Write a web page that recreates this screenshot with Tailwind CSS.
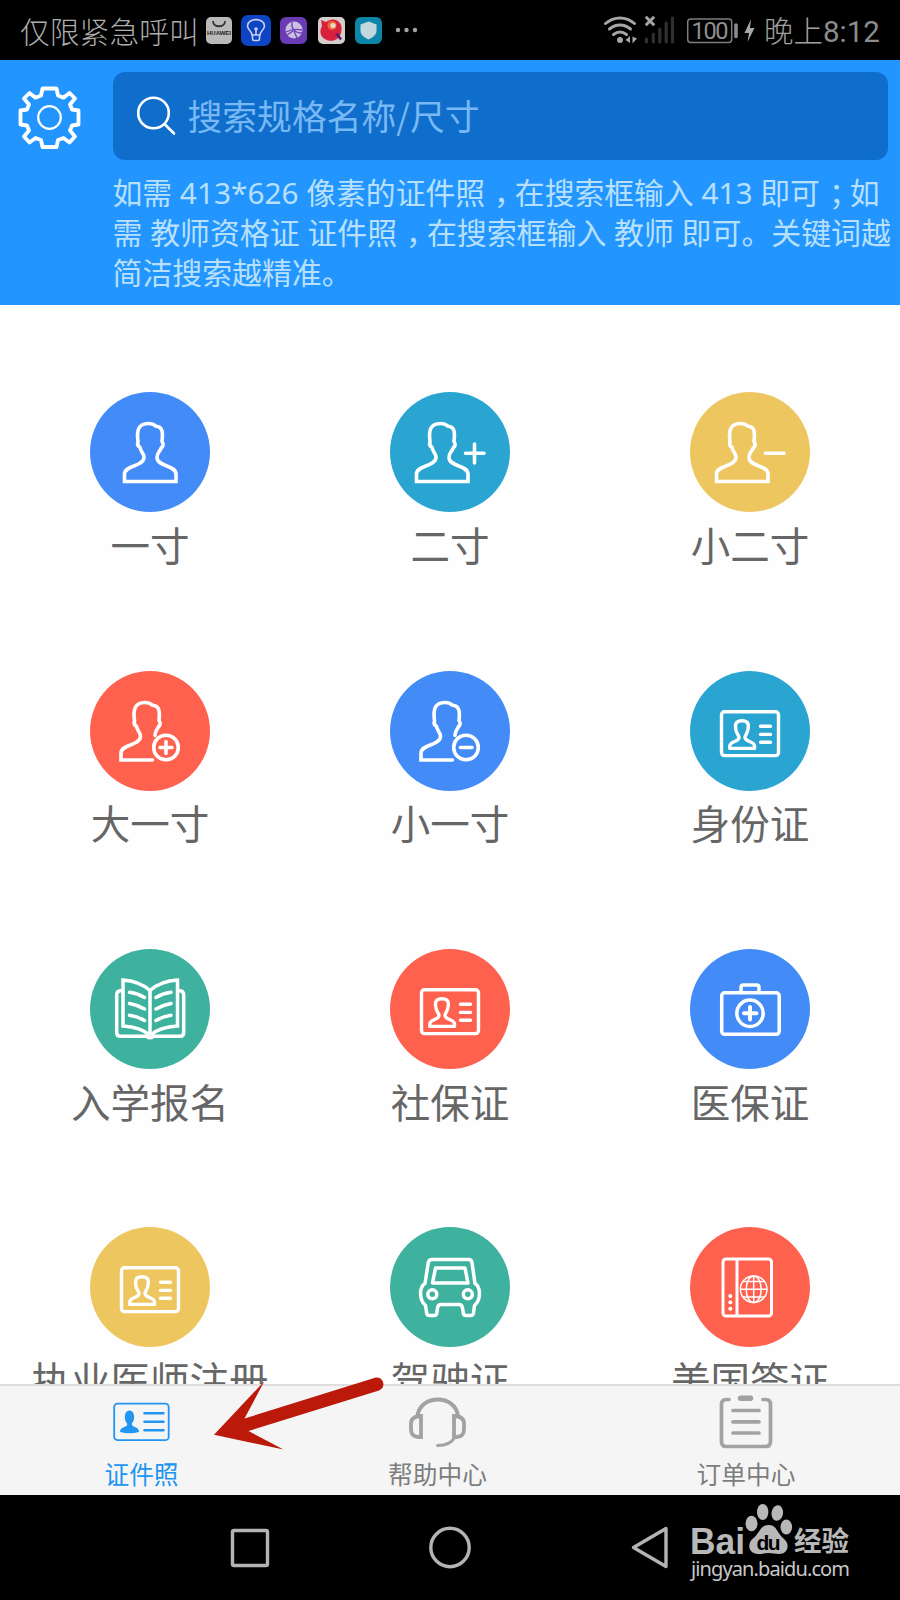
<!DOCTYPE html>
<html lang="zh-CN">
<head>
    <meta charset="UTF-8">
    <meta name="viewport" content="width=device-width, initial-scale=1.0">
    <title>证件照</title>
    <script src="https://cdn.jsdelivr.net/npm/@tailwindcss/browser@4"></script>
</head>
<body class="bg-black">
    <!-- Shared icon shapes -->
    <svg class="hidden">
        <symbol id="person" viewBox="0 0 120 120" overflow="visible">
            <path d="M34.5 89.5V82C34.5 73 53.5 75 54 65.5C54 61 51 60.5 50 55.5C47.5 54 47.2 52 48 49.5C46.5 39 48 31.5 58.5 31.5C62 31.5 64 32.500 66 34.200C73 34.500 73 41 72 49.5C74 52 73 54.5 71.5 55.5C69.5 60.5 66.5 61 67 66C68 75 86 73 86 82V89.5Z"/>
        </symbol>
        <symbol id="person-open" viewBox="0 0 120 120">
            <path d="M62.5 89H31V82C31 73 50 75 50.5 65.5C50.5 61 47.5 60.5 46.5 55.5C44 54 43.7 52 44.5 49.5C43 39 44.5 31.5 55 31.5C58.5 31.5 60.5 32.5 62.5 34.2C69.5 34.5 70 41 69 49.5C71 52 70 54.5 68.5 55.5C67 59 65 60 65 64.5"/>
            <circle cx="76" cy="76.5" r="12.3"/>
        </symbol>
        <symbol id="card" viewBox="0 0 120 120">
            <rect x="31.5" y="40.8" width="57" height="43.8" rx="3"/>
            <path d="M39.800 77.400V75C39.800 70 49 71 49 66.500C49 64 46 62.500 45.800 58C44.500 52 47 49.700 52 49.700C57 49.700 59.300 52 58 58C57.800 62.500 55 64 55 66.500C55 71 64.500 70 64.500 75V77.400Z"/>
            <path d="M70.5 55.2H80.5M70.5 63.4H80.5M70.5 71.3H80.5"/>
        </symbol>
    </svg>

    <div class="flex flex-col w-[900px] h-[1600px] overflow-hidden relative font-['Noto_Sans','Noto_Sans_CJK_SC',sans-serif]">
        <!-- Status bar -->
        <div class="h-[60px] shrink-0 flex items-center pl-5 pr-5 text-[#8c8c8c] text-[30px] leading-none">
            <span class="w-[186px] pt-[1px] font-['Noto_Sans_CJK_SC',sans-serif] font-light text-[29.8px] text-[#acacac] whitespace-nowrap">仅限紧急呼叫</span>
            <svg class="w-[216px] h-[60px]" viewBox="206 0 216 60" fill="none">
                <rect x="206" y="17" width="26" height="27" rx="5" fill="#b9b9b9"/>
                <path d="M213 21C213 28 225 28 225 21" stroke="#333" stroke-width="1.8"/>
                <text x="219" y="34.5" font-size="6" font-weight="700" fill="#222" text-anchor="middle" textLength="24" font-family="Liberation Sans, sans-serif">HUAWEI</text>
                <rect x="241" y="15" width="30" height="31" rx="7" fill="#0d44c4"/>
                <path d="M252 35C252 31 247.500 30 247.500 26C247.500 17.500 264.500 17.500 264.500 26C264.500 30 260 31 260 35ZM252.500 36V39Q252.500 40.500 254 40.500H258Q259.500 40.500 259.500 39V36M256 35V29" stroke="#c9d2ea" stroke-width="1.600" stroke-linecap="round"/>
                <circle cx="256" cy="29" r="1.800" fill="#c9d2ea"/>
                <rect x="280" y="17" width="27" height="27" rx="6" fill="#6a3bb4"/>
                <circle cx="294" cy="30" r="8.500" fill="#c9bfe0"/>
                <path d="M292 22C291 29 295 33 302 33M286 32C292 29 297 29 302 30M293 31L287 35M294 31L297 38" stroke="#6a3bb4" stroke-width="1.300"/>
                <rect x="318" y="17" width="27" height="27" rx="5" fill="#d4cdcb"/>
                <path d="M321 20L326 22C333 16 343 21 341.500 30C341 38 335 42 328 40.500C320 38 319 31 322 26Z" fill="#d8213f"/>
                <circle cx="332" cy="25.500" r="4.500" fill="#ee6a2d"/>
                <circle cx="333" cy="25.500" r="2.600" fill="#e8d8d4"/>
                <path d="M336.500 33.500L341 39.500" stroke="#5a1b6c" stroke-width="2.600"/>
                <rect x="355" y="17" width="27" height="27" rx="6" fill="#0c86a8"/>
                <path d="M368.500 21.500L376.500 24.500V31C376.500 35 372 38 368.500 39.500C365 38 360.500 35 360.500 31V24.500Z" fill="#c2d8de"/>
                <g fill="#a3a3a3"><circle cx="398" cy="30" r="2.200"/><circle cx="406.500" cy="30" r="2.200"/><circle cx="415" cy="30" r="2.200"/></g>
            </svg>
            <svg class="w-[160px] h-[60px] ml-auto mr-[3px]" viewBox="600 0 160 60" fill="none">
                <g stroke="#a6a6a6" stroke-width="3" stroke-linecap="round">
                    <path d="M605.500 23.500C614 16 626 16 634.500 23.500M609.500 29C616 23.500 624 23.500 630.500 29M613.500 34.500C618 31 622 31 626.500 34.500"/>
                    <path d="M645.800 16.800L654.200 25.200M654.200 16.800L645.800 25.200" stroke-linecap="butt"/>
                </g>
                <circle cx="620" cy="40" r="3" fill="#a6a6a6"/>
                <path d="M630 36V43L625.500 40ZM632.500 36.500V43.500L637 38.500Z" fill="#a6a6a6"/>
                <path d="M646.500 39V42M653.300 34V42M659.800 29V42M666.200 23V42M672.500 18V42" stroke="#2f2f2f" stroke-width="3.200" stroke-linecap="round"/>
                <rect x="687.700" y="19" width="44" height="23.500" rx="3" stroke="#7d7d7d" stroke-width="1.500"/>
                <text x="710" y="39" font-size="23.500" fill="#8f8f8f" text-anchor="middle" textLength="37" font-family="Roboto, sans-serif">100</text>
                <path d="M736 25V36.500" stroke="#8c8c8c" stroke-width="3.600" stroke-linecap="round"/>
                <path d="M751 19L744.500 33H749L747.500 42L754.500 28H750Z" fill="#a6a6a6"/>
            </svg>
            <span class="w-[117px] pt-[5px] pl-[1px] font-[Roboto,'Noto_Sans_CJK_SC',sans-serif] text-[29.5px] whitespace-nowrap"><span class="font-light text-[#a0a0a0]">晚上</span>8:12</span>
        </div>

        <!-- Header -->
        <div class="h-[245px] shrink-0 bg-[#2295ff] flex pt-3">
            <div class="w-[112.5px] shrink-0 pl-[18px] pt-[13.5px]">
                <svg class="w-[63px] h-[63px]" viewBox="-31.500 -31.500 63 63" fill="none" stroke="#fff" stroke-linejoin="round">
                    <path stroke-width="3.800" d="M-7 -29H7L8.500 -22L14 -19.800L20 -24.500L25.500 -19L20.500 -13L22.500 -8L29 -7V7L22.500 8L20.500 13L25.500 19L20 25L14 20.500L8.500 22.500L7 29.500H-7L-8.500 22.500L-14 20.500L-20 25L-25.500 19L-20.500 13L-22.500 8L-29 7V-7L-22.500 -8L-20.500 -13L-25.500 -19L-20 -24.500L-14 -19.800L-8.500 -22Z"/>
                    <circle r="11.300" stroke-width="2.200"/>
                </svg>
            </div>
            <div>
                <div class="w-[775px] h-[88px] rounded-xl bg-[#0f6ecb] flex items-center pl-6">
                    <svg class="w-10 h-10" viewBox="0 0 40 40" fill="none" stroke="#fff" stroke-width="2.600" stroke-linecap="round">
                        <circle cx="16.500" cy="17" r="15.300"/>
                        <path d="M27.500 28L37 37.500"/>
                    </svg>
                    <span class="ml-[11px] -mt-0.5 text-[34.8px] leading-none text-[#78b8f4] font-['Noto_Sans_CJK_SC',sans-serif]">搜索规格名称/尺寸</span>
                </div>
                <div class="mt-[13px] text-[29.9px] leading-[40px] text-[#b8e0fc] whitespace-nowrap">
                    <p class="h-[40px] text-[29.8px]">如需 413*626 像素的证件照<span class="pl-[9px] -mr-[9px]">，</span>在搜索框输入 413 即可<span class="pl-[9px] -mr-[9px]">；</span>如</p>
                    <p class="h-[40px]">需 教师资格证 证件照<span class="pl-[9px] -mr-[9px]">，</span>在搜索框输入 教师 即可。关键词越</p>
                    <p class="h-[40px]">简洁搜索越精准。</p>
                </div>
            </div>
        </div>

        <!-- Photo sizes -->
        <div class="h-[1079px] shrink-0 overflow-hidden bg-[#fefefe] pt-[87.4px]">
            <div class="grid grid-cols-3 auto-rows-[278.3px] text-[39.5px] leading-[56px] text-[#666] whitespace-nowrap">
                <div class="flex flex-col items-center">
                    <div class="size-[120px] rounded-full bg-[#438bf7]">
                        <svg viewBox="0 0 120 120" fill="none" stroke="#fff" stroke-width="3.600"><use href="#person" width="120" height="120"/></svg>
                    </div>
                    <span class="mt-[5.6px]">一寸</span>
                </div>
                <div class="flex flex-col items-center">
                    <div class="size-[120px] rounded-full bg-[#2aa5d2]">
                        <svg viewBox="0 0 120 120" fill="none" stroke="#fff" stroke-width="3.600"><use href="#person" x="-8" width="120" height="120"/><path d="M75.500 61.300H94M84.500 52V71" stroke-linecap="round"/></svg>
                    </div>
                    <span class="mt-[5.6px]">二寸</span>
                </div>
                <div class="flex flex-col items-center">
                    <div class="size-[120px] rounded-full bg-[#edc65f]">
                        <svg viewBox="0 0 120 120" fill="none" stroke="#fff" stroke-width="3.600"><use href="#person" x="-8" width="120" height="120"/><path d="M75.500 61.300H94" stroke-linecap="round"/></svg>
                    </div>
                    <span class="mt-[5.6px]">小二寸</span>
                </div>
                <div class="flex flex-col items-center">
                    <div class="size-[120px] rounded-full bg-[#ff614f]">
                        <svg viewBox="0 0 120 120" fill="none" stroke="#fff" stroke-width="3.600" stroke-linecap="round"><use href="#person-open"/><path d="M70 76.500H82M76 70.500V82.500"/></svg>
                    </div>
                    <span class="mt-[5.6px]">大一寸</span>
                </div>
                <div class="flex flex-col items-center">
                    <div class="size-[120px] rounded-full bg-[#438bf7]">
                        <svg viewBox="0 0 120 120" fill="none" stroke="#fff" stroke-width="3.600" stroke-linecap="round"><use href="#person-open"/><path d="M70.500 76.500H82"/></svg>
                    </div>
                    <span class="mt-[5.6px]">小一寸</span>
                </div>
                <div class="flex flex-col items-center">
                    <div class="size-[120px] rounded-full bg-[#2aa5d2]">
                        <svg viewBox="0 0 120 120" fill="none" stroke="#fff" stroke-width="3.400" stroke-linecap="round" stroke-linejoin="round"><use href="#card"/></svg>
                    </div>
                    <span class="mt-[5.6px]">身份证</span>
                </div>
                <div class="flex flex-col items-center">
                    <div class="size-[120px] rounded-full bg-[#3eb29e]">
                        <svg viewBox="0 0 120 120" fill="none" stroke="#fff" stroke-width="3.500" stroke-linecap="round">
                            <path d="M60 41.500C52 34.500 43 31.500 33 31V77C43 77.500 53 80 60 86.500C67 80 77 77.500 87.500 77V31C77 31.500 68 34.500 60 41.500V86"/>
                            <path d="M32 41.500C28.500 41.500 26.700 43 26.700 46V83.500C26.700 86 28 87.300 30.500 87.300H90C92.500 87.300 93.700 86 93.700 83.500V46C93.700 43 92 41.500 88.500 41.500"/>
                            <path d="M39.500 43.300Q48 44.500 54.500 48.500M39.500 54.500Q48 56 54.500 60M39.500 66.300Q48 67.500 54.500 71.500M81 43.300Q72.500 44.500 66 48.500M81 54.500Q72.500 56 66 60M81 66.300Q72.500 67.500 66 71.500"/>
                            <ellipse cx="60" cy="88" rx="4" ry="2.500" fill="#fff" stroke="none"/>
                        </svg>
                    </div>
                    <span class="mt-[5.6px]">入学报名</span>
                </div>
                <div class="flex flex-col items-center">
                    <div class="size-[120px] rounded-full bg-[#ff614f]">
                        <svg viewBox="0 0 120 120" fill="none" stroke="#fff" stroke-width="3.400" stroke-linecap="round" stroke-linejoin="round"><use href="#card"/></svg>
                    </div>
                    <span class="mt-[5.6px]">社保证</span>
                </div>
                <div class="flex flex-col items-center">
                    <div class="size-[120px] rounded-full bg-[#438bf7]">
                        <svg viewBox="0 0 120 120" fill="none" stroke="#fff" stroke-width="3.500" stroke-linecap="round">
                            <rect x="31.700" y="43.800" width="57.500" height="41.500" rx="3"/>
                            <path d="M51 43V38.500Q51 36 53.500 36H66.500Q69 36 69 38.500V43"/>
                            <circle cx="60" cy="64.300" r="13.200"/>
                            <path d="M54 64.300H66.500M60 58V70.500" stroke-width="4"/>
                        </svg>
                    </div>
                    <span class="mt-[5.6px]">医保证</span>
                </div>
                <div class="flex flex-col items-center">
                    <div class="size-[120px] rounded-full bg-[#edc65f]">
                        <svg viewBox="0 0 120 120" fill="none" stroke="#fff" stroke-width="3.400" stroke-linecap="round" stroke-linejoin="round"><use href="#card"/></svg>
                    </div>
                    <span class="mt-[5.6px]">执业医师注册</span>
                </div>
                <div class="flex flex-col items-center">
                    <div class="size-[120px] rounded-full bg-[#3eb29e]">
                        <svg viewBox="0 0 120 120" fill="none" stroke="#fff" stroke-width="3.500" stroke-linejoin="round">
                            <path d="M42 32.500H78.500Q81.500 32.500 82 35.500L85 56.500C91 60 91 73 84.500 78.500L83.500 86Q83 88.500 80.500 88.500H76Q73.500 88.500 73.300 86L72.500 81Q72 77.500 69 77.500H51Q48 77.500 47.500 81L46.800 86Q46.500 88.500 44 88.500H39.500Q37 88.500 36.700 86L35.500 78.500C29 73 29 60 35 56.500L38.300 35.500Q39 32.500 42 32.500Z"/>
                            <path d="M45.500 41H75L78 56H42.500Z"/>
                            <circle cx="42.300" cy="67.300" r="4.500"/>
                            <circle cx="77.800" cy="67.300" r="4.500"/>
                        </svg>
                    </div>
                    <span class="mt-[5.6px]">驾驶证</span>
                </div>
                <div class="flex flex-col items-center">
                    <div class="size-[120px] rounded-full bg-[#ff614f]">
                        <svg viewBox="0 0 120 120" fill="none" stroke="#fff" stroke-width="3">
                            <rect x="33" y="32" width="48.500" height="57" rx="3"/>
                            <path d="M47 32V89"/>
                            <g fill="#fff" stroke="none"><circle cx="40.300" cy="69" r="2"/><circle cx="40.300" cy="75.300" r="2"/><circle cx="40.300" cy="81.700" r="2"/></g>
                            <g stroke-width="1.500">
                                <circle cx="63.700" cy="62.200" r="13.300"/>
                                <ellipse cx="63.700" cy="62.200" rx="7.500" ry="13.300"/>
                                <path d="M63.700 49V75.500M50.500 62.200H77M53 54.500H74.500M53 70H74.500"/>
                            </g>
                        </svg>
                    </div>
                    <span class="mt-[5.6px]">美国签证</span>
                </div>
            </div>
        </div>

        <!-- Tabs -->
        <div class="h-[111px] shrink-0 bg-[#f5f5f5] border-t-2 border-[#dedede] flex text-[24.7px] leading-[36px] text-[#7d7d7d]">
            <div class="w-[283px] flex flex-col items-center text-[#2295f2]">
                <svg class="w-[60px] h-[71px]" viewBox="0 0 60 71" fill="none" stroke="currentColor">
                    <rect x="2.200" y="17.700" width="54.500" height="36.500" rx="3.500" stroke-width="1.800"/>
                    <path d="M8 46C8 40 16 42 15.200 37.500C11.500 34 12 24.500 17.500 24.500C23 24.500 23.500 34 19.800 37.500C19.500 42 27 40 27 46Q17.500 48.500 8 46Z" fill="currentColor" stroke="none"/>
                    <path d="M32.500 27.300H51.500M32.500 35.800H51.500M32.500 44.300H51.500" stroke-width="2.600" stroke-linecap="round"/>
                </svg>
                <span>证件照</span>
            </div>
            <div class="w-[309px] flex flex-col items-center">
                <svg class="w-[60px] h-[71px]" viewBox="0 0 60 71" fill="none" stroke="#a2a2a2" stroke-width="3.800">
                    <path d="M9.500 30C12 8 47.500 8 50 30"/>
                    <path d="M13 30V51H10Q3 50.500 3 43.500V37.500Q3 30.500 13 30ZM46 30V51H49Q56 50.500 56 43.500V37.500Q56 30.500 46 30Z"/>
                    <path d="M47 51C44 56.500 37.500 59.500 29.500 59.500" stroke-width="3" stroke-linecap="round"/>
                </svg>
                <span>帮助中心</span>
            </div>
            <div class="w-[308px] flex flex-col items-center">
                <svg class="w-[60px] h-[71px]" viewBox="0 0 60 71" fill="none" stroke="#a2a2a2" stroke-width="3.700" stroke-linecap="round">
                    <path d="M13 13.500H10.500Q5.500 13.500 5.500 18.500V55.500Q5.500 60.500 10.500 60.500H49.500Q54.500 60.500 54.500 55.500V18.500Q54.500 13.500 49.500 13.500H47"/>
                    <path d="M24.500 12.300H34.500" stroke-width="5.500"/>
                    <path d="M17 24.500H43M17 35.800H43M17 47H43"/>
                </svg>
                <span>订单中心</span>
            </div>
        </div>

        <!-- Android navigation -->
        <div class="h-[105px] shrink-0 bg-black">
            <svg class="w-[900px] h-[105px]" viewBox="0 1495 900 105" fill="none" stroke="#b4b4b4" stroke-width="3.400">
                <rect x="232.500" y="1530.500" width="35" height="35" rx="1.500"/>
                <circle cx="450" cy="1547.500" r="19.200"/>
                <path d="M666 1528.500V1566.500L633.500 1547.500Z" stroke-linejoin="round"/>
                <g fill="#b8b8b8" stroke="none">
                    <text x="690" y="1554" font-size="36.500" font-weight="700" textLength="55" lengthAdjust="spacingAndGlyphs" font-family="Liberation Sans, sans-serif">Bai</text>
                    <ellipse cx="751.500" cy="1523.500" rx="6" ry="7.700"/>
                    <ellipse cx="762.700" cy="1512" rx="5.700" ry="8"/>
                    <ellipse cx="777.300" cy="1513" rx="5.800" ry="7.800" transform="rotate(8 777 1513)"/>
                    <ellipse cx="786.300" cy="1527" rx="5.800" ry="7.500"/>
                    <path d="M768.500 1525C777 1525 777 1533 783 1538C791 1544 788 1554 779 1554C775 1554 772 1553 768.500 1553C765 1553 762 1554 758 1554C749 1554 746 1544 753.500 1538C760 1533 760 1525 768.500 1525Z"/>
                    <text x="768.500" y="1549.500" font-size="21" font-weight="700" fill="#000" text-anchor="middle" textLength="24" font-family="Liberation Sans, sans-serif">du</text>
                    <text x="794" y="1551" font-size="27.500" font-weight="700" font-family="Noto Sans CJK SC, sans-serif">经验</text>
                    <text x="691" y="1575.500" font-size="20" fill="#c8c8c8" textLength="159" font-family="Noto Sans, sans-serif">jingyan.baidu.com</text>
                </g>
            </svg>
        </div>

        <!-- Pointer to the first tab -->
        <svg class="absolute left-[210px] top-[1370px] w-[180px] h-[90px]" viewBox="210 1370 180 90">
            <path fill="#bb190a" d="M214 1434.700L264.500 1381L244.500 1418.500L375 1377.700C384 1376 386.500 1388 379 1390.500L248.500 1431L283.500 1449.500Z"/>
        </svg>
    </div>
</body>
</html>
